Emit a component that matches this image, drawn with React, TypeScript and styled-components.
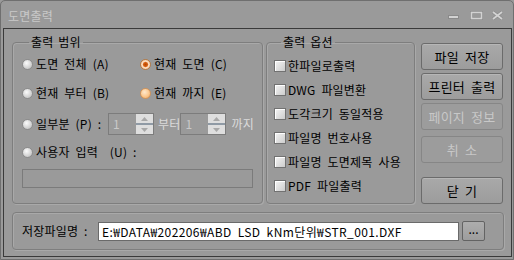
import * as React from 'react';
import styled, {createGlobalStyle, css} from "styled-components";

const GlobalStyle = createGlobalStyle`
    body {
        margin: 0;
        background: #9a9a9a;
        font-family: "Noto Sans CJK KR", "DejaVu Sans", sans-serif;
        font-size: 12px;
        line-height: 14px;
        word-spacing: 3px;
        letter-spacing: 0.2px;
        color: #000;
    }
`;

type RadioState = 'off' | 'on' | 'hot';

const WindowControls = () => (
    <ControlsSvg width="56" height="9" viewBox="0 0 56 9">
        {/* minimize */}
        <rect x="0.5" y="4.5" width="10" height="3" fill="#d2d2d2" stroke="#8a8a8a"/>
        {/* maximize */}
        <rect x="23.5" y="1.5" width="10" height="6" fill="none" stroke="#8a8a8a" strokeWidth="3"/>
        <rect x="23.5" y="1.5" width="10" height="6" fill="none" stroke="#d2d2d2" strokeWidth="1.6"/>
        {/* close */}
        <path d="M45 1 L54 8 M54 1 L45 8" stroke="#8a8a8a" strokeWidth="3.2"/>
        <path d="M45 1 L54 8 M54 1 L45 8" stroke="#d2d2d2" strokeWidth="1.8"/>
    </ControlsSvg>
);

const Spin = ({value}: { value: string }) => (
    <SpinBox>
        <SpinText>{value}</SpinText>
        <SpinArrows>
            <SpinHalf>
                <svg width="7" height="4" viewBox="0 0 7 4"><path d="M0 4 L3.5 0 L7 4Z" fill="#a8a8a8"/></svg>
            </SpinHalf>
            <SpinLine/>
            <SpinHalf>
                <svg width="7" height="4" viewBox="0 0 7 4"><path d="M0 0 L3.5 4 L7 0Z" fill="#a8a8a8"/></svg>
            </SpinHalf>
        </SpinArrows>
    </SpinBox>
);

const Option = ({label, state, width}: { label: string; state: RadioState; width?: number }) => (
    <RadioOption $width={width}>
        <RadioDot $state={state}/>
        <span>{label}</span>
    </RadioOption>
);

const App = () => {
    const checks = ['한파일로출력', 'DWG 파일변환', '도각크기 동일적용', '파일명 번호사용', '파일명 도면제목 사용', 'PDF 파일출력'];
    return <>
        <GlobalStyle/>
        <Window>
            <TitleBar>
                <Title>도면출력</Title>
                <WindowControls/>
            </TitleBar>
            <Client>
                <TopRow>
                    <Group $width={251} $padLeft={9}>
                        <Legend>출력 범위</Legend>
                        <RadioArea>
                            <Row $height={20} $top={0}>
                                <Option label="도면 전체 (A)" state="off" width={118}/>
                                <Option label="현재 도면 (C)" state="on"/>
                            </Row>
                            <Row $height={20} $top={9}>
                                <Option label="현재 부터 (B)" state="off" width={118}/>
                                <Option label="현재 까지 (E)" state="hot"/>
                            </Row>
                            <Row $height={22} $top={10}>
                                <Option label="일부분 (P) :" state="off" width={86}/>
                                <Spin value="1"/>
                                <DimWord $left={4}>부터</DimWord>
                                <Spin value="1"/>
                                <DimWord $left={5}>까지</DimWord>
                            </Row>
                            <Row $height={20} $top={7}>
                                <Option label="사용자 입력  (U) :" state="off"/>
                            </Row>
                            <DisabledField/>
                        </RadioArea>
                    </Group>
                    <Group $width={149} $padLeft={7} $left={3}>
                        <Legend>출력 옵션</Legend>
                        <CheckArea>
                            {checks.map(c => <CheckRow key={c}>
                                <CheckBox/>
                                <span>{c}</span>
                            </CheckRow>)}
                        </CheckArea>
                    </Group>
                    <ButtonColumn>
                        <ActionButton $top={8}>파일 저장</ActionButton>
                        <ActionButton $top={3}>프린터 출력</ActionButton>
                        <ActionButton $top={3} disabled>페이지 정보</ActionButton>
                        <ActionButton $top={6} disabled>취 소</ActionButton>
                        <ActionButton $top={14}>닫 기</ActionButton>
                    </ButtonColumn>
                </TopRow>
                <PathGroup>
                    <PathLabel>저장파일명 :</PathLabel>
                    <PathInput readOnly value="E:₩DATA₩202206₩ABD LSD kNm단위₩STR_001.DXF"/>
                    <BrowseButton>...</BrowseButton>
                </PathGroup>
            </Client>
        </Window>
    </>;
}

const Window = styled.div`
    width: 514px;
    height: 260px;
    box-sizing: border-box;
    border: 1px solid #6f6f6f;
    border-radius: 5px 5px 0 0;
    background: #9a9a9a;
    padding: 0 1px 2px 2px;
    display: flex;
    flex-direction: column;
`;
const TitleBar = styled.div`
    height: 27px;
    display: flex;
    align-items: center;
    padding: 2px 8px 0 5px;
    box-sizing: border-box;
`;
const Title = styled.span`
    color: #c9c9c9;
    flex: 1;
`;
const ControlsSvg = styled.svg`
    display: block;
`;
const Client = styled.div`
    flex: 1;
    border: 1px solid #3a3a3a;
    padding: 6px 7px 6px 8px;
    display: flex;
    flex-direction: column;
`;
const TopRow = styled.div`
    height: 169px;
    display: flex;
`;
const Group = styled.fieldset<{ $width: number; $padLeft: number; $left?: number }>`
    width: ${p => p.$width}px;
    margin: 0 0 0 ${p => p.$left ?? 0}px;
    padding: 0 0 0 ${p => p.$padLeft}px;
    box-sizing: border-box;
    min-width: 0;
    border: 1px solid #7e7e7e;
    border-radius: 4px;
    box-shadow: inset 1px 1px 0 #a9a9a9, 1px 1px 0 #a9a9a9;
`;
const Legend = styled.legend`
    margin-left: 7px;
    padding: 0 2px;
    line-height: 14px;
    word-spacing: 2px;
`;
const RadioArea = styled.div`
    padding-top: 5px;
    display: flex;
    flex-direction: column;
`;
const Row = styled.div<{ $height: number; $top: number }>`
    height: ${p => p.$height}px;
    margin-top: ${p => p.$top}px;
    display: flex;
    align-items: center;
    white-space: pre;
`;
const RadioOption = styled.label<{ $width?: number }>`
    display: flex;
    align-items: center;
    width: ${p => p.$width ? `${p.$width}px` : 'auto'};
    white-space: pre;
`;
const radioStates = {
    off: css`
        border-color: #8c8c8c;
        background: radial-gradient(circle at 40% 35%, #fbfbfb 0, #dcdcdc 45%, #b8b8b8 100%);
    `,
    on: css`
        border-color: #b57a45;
        background: radial-gradient(circle, #b84800 0, #d65e10 2px, #fbe2c8 3.2px, #f2b57a 100%);
    `,
    hot: css`
        border-color: #d49458;
        background: radial-gradient(circle at 40% 35%, #ffe8cc 0, #fbc88f 55%, #eea35c 100%);
    `,
};
const RadioDot = styled.span<{ $state: RadioState }>`
    width: 11px;
    height: 11px;
    box-sizing: border-box;
    border: 1px solid;
    border-radius: 50%;
    margin-right: 3px;
    flex-shrink: 0;
    ${p => radioStates[p.$state]}
`;
const SpinBox = styled.div`
    width: 46px;
    height: 22px;
    box-sizing: border-box;
    border: 1px solid #7c7c7c;
    display: flex;
`;
const SpinText = styled.span`
    flex: 1;
    padding: 3px 0 0 4px;
    color: #c9c9c9;
`;
const SpinArrows = styled.div`
    width: 17px;
    display: flex;
    flex-direction: column;
    background: #dedede;
`;
const SpinHalf = styled.div`
    flex: 1;
    display: flex;
    align-items: center;
    justify-content: center;
`;
const SpinLine = styled.div`
    height: 2px;
    background: #8f9aa5;
`;
const DimWord = styled.span<{ $left: number }>`
    margin-left: ${p => p.$left}px;
    color: #dadada;
`;
const DisabledField = styled.div`
    width: 231px;
    height: 19px;
    margin-top: 7px;
    box-sizing: border-box;
    border: 1px solid #7b7b7b;
`;
const CheckArea = styled.div`
    padding-top: 5px;
`;
const CheckRow = styled.label`
    height: 24px;
    display: flex;
    align-items: center;
    white-space: pre;
`;
const CheckBox = styled.span`
    width: 12px;
    height: 12px;
    box-sizing: border-box;
    margin-right: 2px;
    border: 1px solid #727272;
    background: linear-gradient(135deg, #f4f4f4, #cdcdcd);
    box-shadow: inset 1px 1px 0 #ffffff;
`;
const ButtonColumn = styled.div`
    width: 82px;
    margin-left: 6px;
    display: flex;
    flex-direction: column;
`;
const ActionButton = styled.button<{ $top: number }>`
    height: 27px;
    margin-top: ${p => p.$top}px;
    box-sizing: border-box;
    border: 1px solid #6b6b6b;
    border-radius: 3px;
    background: linear-gradient(#a9a9a9, #9c9c9c);
    box-shadow: inset 0 1px 0 #b6b6b6;
    font: inherit;
    font-size: 13px;
    word-spacing: 3px;
    letter-spacing: inherit;
    color: #000;
    padding: 0;

    &:disabled {
        color: #c8c8c8;
        border-color: #868686;
        background: #9c9c9c;
        box-shadow: none;
    }
`;
const PathGroup = styled.div`
    height: 38px;
    margin-top: 8px;
    box-sizing: border-box;
    border: 1px solid #7e7e7e;
    border-radius: 4px;
    box-shadow: inset 1px 1px 0 #a9a9a9, 1px 1px 0 #a9a9a9;
    display: flex;
    align-items: center;
    padding-left: 9px;
    width: 492px;
`;
const PathLabel = styled.span`
    width: 76px;
`;
const PathInput = styled.input`
    width: 361px;
    height: 19px;
    box-sizing: border-box;
    border: 1px solid #6a6a6a;
    background: #fff;
    padding: 0 0 0 3px;
    font: inherit;
    word-spacing: inherit;
    letter-spacing: 0.4px;
    color: #000;
    outline: none;
`;
const BrowseButton = styled.button`
    width: 23px;
    height: 20px;
    margin-left: 3px;
    box-sizing: border-box;
    border: 1px solid #636363;
    border-radius: 2px;
    background: linear-gradient(#adadad, #9d9d9d);
    font: inherit;
    letter-spacing: 0;
    padding: 0 0 4px;
    color: #000;
`;

export default App;
